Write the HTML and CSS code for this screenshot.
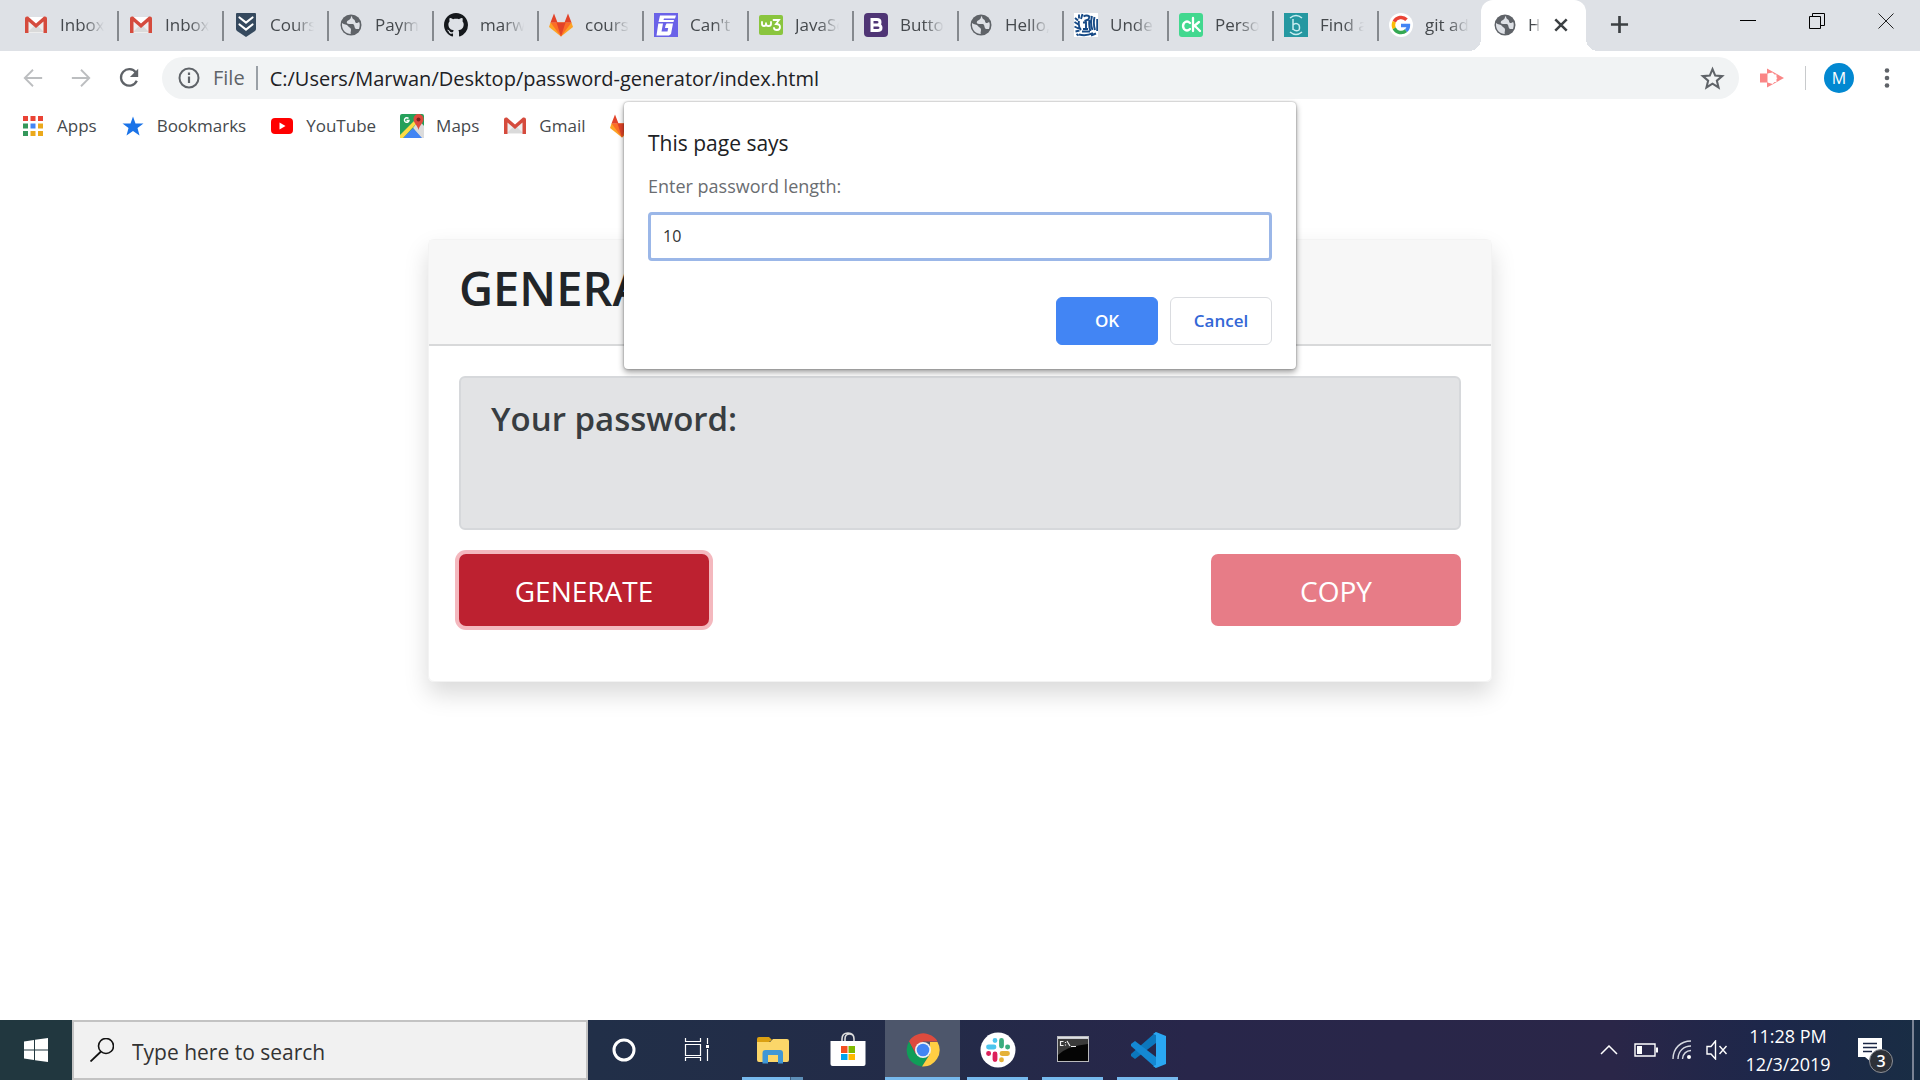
FILE: index.html
```html
<!DOCTYPE html>
<html lang="en">
<head>
<meta charset="utf-8">
<title>Hello, world!</title>
<link rel="stylesheet" href="styles.css">
</head>
<body>
<svg class="sprite" aria-hidden="true">
  <symbol id="gmail" viewBox="0 0 24 24"><path fill="#eee" d="M3 4h18v16H3z"/><path fill="#dadada" d="M4 19l8-8 8 8z"/><path fill="#fff" d="M4 4h16l-8 7z"/><path fill="#d54b3d" d="M1 20V5.500q0-2 2-2h1l8 7 8-7h1q2 0 2 2V20h-3.500V8.500L12 15 4.500 8.500V20z"/></symbol>
  <symbol id="shield" viewBox="0 0 24 24"><path fill="#35495e" d="M2 1q0-1 1-1h18q1 0 1 1v15q0 1-1 2l-9 6-9-6q-1-1-1-2z"/><path fill="none" stroke="#fff" stroke-width="2.200" stroke-linecap="round" d="M5.500 4.500l6.500 5 6.500-5M5.500 11.500l6.500 5 6.500-5"/></symbol>
  <symbol id="globe" viewBox="0 0 24 24"><circle cx="12" cy="12" r="10.500" fill="#5f6368"/><path fill="#dee1e6" d="M3 10c2 2 5 1 6 3 1 2 3 1 3 4 0 2-1 3 0 4-5 0-9-4-9-9zM13 3c-2 1 0 2-3 4-3 1-3 4 0 4h4c2 1 1 4 3 5h3c1-3 1-6 0-7-2 2-4 1-4-1 0-2-3-1-3-5z"/></symbol>
  <symbol id="github" viewBox="0 0 16 16"><path fill="#15181c" d="M8 0C3.580 0 0 3.580 0 8c0 3.540 2.290 6.530 5.470 7.590.4.070.55-.17.55-.38v-1.490c-2.010.37-2.530-.49-2.690-.94-.09-.23-.48-.94-.82-1.130-.28-.15-.68-.52-.01-.53.63-.01 1.080.58 1.230.82.72 1.210 1.870.87 2.330.66.07-.52.28-.87.510-1.070-1.780-.2-3.640-.89-3.640-3.950 0-.87.310-1.590.82-2.150-.08-.2-.36-1.020.08-2.120 0 0 .67-.21 2.200.82.640-.18 1.320-.27 2-.27s1.360.09 2 .27c1.530-1.040 2.200-.82 2.200-.82.440 1.100.16 1.920.08 2.120.510.56.82 1.270.82 2.150 0 3.070-1.870 3.750-3.650 3.950.29.25.540.73.540 1.480v2.200c0 .21.150.46.550.38A8.010 8.010 0 0 0 16 8c0-4.420-3.580-8-8-8z"/></symbol>
  <symbol id="gitlab" viewBox="0 0 24 24"><path fill="#fca326" d="M1.500 9.500L0 14l12 9.500L24 14l-1.500-4.500z"/><path fill="#fc6d26" d="M1.500 9.500L12 23.500 22.500 9.500z"/><path fill="#e24329" d="M5 .5l3.500 9h-7zM19 .5l3.500 9h-7zM7.500 9.500h9L12 23.500z"/></symbol>
  <symbol id="slant-g" viewBox="0 0 24 24"><path fill="#6a62e8" d="M0 0h24v24H0z"/><path fill="#fff" d="M6 2.500h16l-1 3H10L9.500 7H20l-.5 2H4.500zM4.300 10.500H9L7.500 18.500h6l.7-3.500H11l.5-2.500 1-2H19L17 21l-2 1.500H2.500z"/></symbol>
  <symbol id="w3" viewBox="0 0 24 24"><rect y="2" width="24" height="20" rx="2" fill="#8ac53e"/><path fill="none" stroke="#fff" stroke-width="1.800" stroke-linecap="round" d="M3 9v2q0 2 2 2t2-2V9.500 11q0 2 2.500 2T12 11V9M14.500 7H20l-3 4q4 0 4 3t-3 3-3-2"/></symbol>
  <symbol id="boot" viewBox="0 0 24 24"><rect width="24" height="24" rx="4" fill="#4f3575"/><path fill="none" stroke="#fff" stroke-width="3" d="M8 6.500h5q3 0 3 2.700t-3 2.700H8h5.500q3.500 0 3.500 2.800t-3.500 2.800H8z"/></symbol>
  <symbol id="eagle" viewBox="0 0 24 24"><path fill="#fff" d="M0 0h24v24H0z"/><path fill="none" stroke="#174a86" stroke-width="1.900" d="M1 5l3 2.500M.5 9l4 2.500M.5 13.500l4 2M1.500 18.500l4-1M5 1.500v4M8.500 1L7 6M5 8q-1 6 2 9M9.500 3.500q3-2 6 0l-1 3-4 1.500M9 9.500h3V15M9 16h5M8 18.500h8M15.500 7q-1 6 1 11M18 3q-2 8 .5 14M20.500 4q-1.500 7 .5 13M23.200 6v12M5 21.500q7 2 14-1.500M2.500 21l2 1.500M17 22.500l5-2"/></symbol>
  <symbol id="ck" viewBox="0 0 24 24"><rect width="24" height="24" rx="3" fill="#42d88f"/><path fill="none" stroke="#fff" stroke-width="2.300" stroke-linecap="round" d="M11 10q-3-3-6 0-2 3 0 6 3 3 6 0M14 5v13M20 9l-6 5M16 13l5 5"/></symbol>
  <symbol id="bb" viewBox="0 0 24 24"><path fill="#2598a1" d="M0 0h24v24H0z"/><path fill="none" stroke="#c9edf0" stroke-width="1.500" d="M6 5q6-5 12 0M6 19q6 5 12 0M9 6v11M9 12q3-3 6 0 1 3 0 5-3 2-6-1"/></symbol>
  <symbol id="google" viewBox="0 0 24 24"><circle cx="12" cy="12" r="12" fill="#fff"/><g fill="none" stroke-width="3.500"><path stroke="#ea4335" d="M5.200 8.800A7.500 7.500 0 0 1 17.500 6.800"/><path stroke="#fbbc05" d="M5.200 8.800a7.500 7.500 0 0 0 0 6.600"/><path stroke="#34a853" d="M5.200 15.400a7.500 7.500 0 0 0 11.800 2.200"/><path stroke="#4285f4" d="M17 17.600q2.400-2 2.400-5.200H12"/></g></symbol>
</svg>

<header class="browser">
  <nav class="tabs" aria-label="Open tabs">
    <div class="tab"><svg><use href="#gmail"/></svg><span>Inbox</span></div>
    <div class="tab"><svg><use href="#gmail"/></svg><span>Inbox</span></div>
    <div class="tab"><svg><use href="#shield"/></svg><span>Cours</span></div>
    <div class="tab"><svg><use href="#globe"/></svg><span>Payme</span></div>
    <div class="tab"><svg><use href="#github"/></svg><span>marwa</span></div>
    <div class="tab"><svg><use href="#gitlab"/></svg><span>course</span></div>
    <div class="tab"><svg><use href="#slant-g"/></svg><span>Can't</span></div>
    <div class="tab"><svg><use href="#w3"/></svg><span>JavaSc</span></div>
    <div class="tab"><svg><use href="#boot"/></svg><span>Button</span></div>
    <div class="tab"><svg><use href="#globe"/></svg><span>Hello,</span></div>
    <div class="tab"><svg><use href="#eagle"/></svg><span>Under</span></div>
    <div class="tab"><svg><use href="#ck"/></svg><span>Person</span></div>
    <div class="tab"><svg><use href="#bb"/></svg><span>Find a</span></div>
    <div class="tab last"><svg><use href="#google"/></svg><span>git ad</span></div>
    <div class="tab active"><svg><use href="#globe"/></svg><span>He</span><button class="icon-btn close" aria-label="Close tab"><svg viewBox="0 0 14 14"><path d="M2 2l10 10M12 2L2 12" stroke="#3c4043" stroke-width="2.200"/></svg></button></div>
    <button class="icon-btn new-tab" aria-label="New tab"><svg viewBox="0 0 20 20"><path d="M10 1v18M1 10h18" stroke="#3c4043" stroke-width="2.800"/></svg></button>
    <div class="window-controls">
      <button class="icon-btn" aria-label="Minimize"><svg viewBox="0 0 16 16"><path d="M0 7.500h16" stroke="#000"/></svg></button>
      <button class="icon-btn" aria-label="Restore"><svg viewBox="0 0 16 16"><path d="M.5 3.500h11v12H.5zM3.500 3.500v-3h12v12h-4" fill="none" stroke="#000"/></svg></button>
      <button class="icon-btn" aria-label="Close"><svg viewBox="0 0 16 16"><path d="M.5.5l15 15M15.500.5l-15 15" stroke="#222"/></svg></button>
    </div>
  </nav>

  <div class="toolbar">
    <button class="icon-btn nav" aria-label="Back"><svg viewBox="0 0 24 24"><path d="M22 12H3M12 3l-9 9 9 9" fill="none" stroke="#bcbec0" stroke-width="2"/></svg></button>
    <button class="icon-btn nav" aria-label="Forward"><svg viewBox="0 0 24 24"><path d="M2 12h19M12 3l9 9-9 9" fill="none" stroke="#bcbec0" stroke-width="2"/></svg></button>
    <button class="icon-btn nav" aria-label="Reload"><svg viewBox="0 0 24 24"><path d="M19.500 6A9 9 0 1 0 20.500 15" fill="none" stroke="#5f6368" stroke-width="2.500"/><path d="M22 2v9h-9z" fill="#5f6368"/></svg></button>
    <div class="omnibox">
      <svg class="info" viewBox="0 0 22 22"><circle cx="11" cy="11" r="9.500" fill="none" stroke="#5f6368" stroke-width="2"/><path d="M11 9.500V16M11 5.500V8" stroke="#5f6368" stroke-width="2.200"/></svg>
      <span class="scheme">File</span>
      <input class="url" aria-label="Address" value="C:/Users/Marwan/Desktop/password-generator/index.html">
      <button class="icon-btn" aria-label="Bookmark this page"><svg class="star" viewBox="0 0 24 24"><path d="M12 3l2.600 6.200 6.700.5-5.100 4.400 1.600 6.500L12 17l-5.800 3.600 1.600-6.500-5.100-4.400 6.700-.5z" fill="none" stroke="#5f6368" stroke-width="2"/></svg></button>
    </div>
    <button class="icon-btn ext" aria-label="Extension"><svg viewBox="0 0 24 20"><path fill="#fa8686" d="M0 5.500h7v9H0zM7 .5l17 9.500-17 9.500z"/><path fill="#fff" d="M7.500 5.500l5-1 2 2h2v3l1 .5-1 1v3h-2l-2 2-5-1.500z"/></svg></button>
    <button class="avatar" aria-label="Profile">M</button>
    <button class="icon-btn menu" aria-label="Menu"><svg viewBox="0 0 6 22"><g fill="#5f6368"><circle cx="3" cy="3.500" r="2.300"/><circle cx="3" cy="11" r="2.300"/><circle cx="3" cy="18.500" r="2.300"/></g></svg></button>
  </div>

  <nav class="bookmarks" aria-label="Bookmarks">
    <a href="#"><svg viewBox="0 0 24 24"><path fill="#ea4335" d="M2 2h5v5H2zM9.500 2h5v5h-5zM17 2h5v5h-5z"/><path fill="#34985b" d="M2 9.500h5v5H2zM2 17h5v5H2z"/><path fill="#4285f4" d="M9.500 9.500h5v5h-5z"/><path fill="#eba91c" d="M17 9.500h5v5h-5zM9.500 17h5v5h-5zM17 17h5v5h-5z"/></svg>Apps</a>
    <a href="#"><svg viewBox="0 0 24 24"><path fill="#1a73e8" d="M12 2.500l2.500 7h8l-6 4.500 2 7.500-6.500-4.500-6.500 4.500 2-7.500-6-4.500h8z"/></svg>Bookmarks</a>
    <a href="#"><svg viewBox="0 0 24 24"><rect x="1" y="4" width="22" height="16" rx="4" fill="#f00"/><path fill="#fff" d="M9.500 8.500l6 3.500-6 3.500z"/></svg>YouTube</a>
    <a href="#"><svg viewBox="0 0 24 24"><rect width="24" height="24" rx="2" fill="#25a05a"/><path fill="#dcdcdc" d="M24 12v12h-3l-8-10 6-8z"/><path fill="#4285f4" d="M3 24l10-10 9 10z"/><path fill="#fddb46" d="M0 21L16 5l1 4L3 24H0z"/><path fill="#dd4b3e" d="M13.500 5a5 5 0 0 1 10 0c0 4-4 6-5 11-1-5-5-7-5-11z"/><circle cx="18.500" cy="5.500" r="2" fill="#7b231e"/><path d="M8.500 4.500a2.300 2.300 0 1 0 .5 2H6.500" fill="none" stroke="#fff" stroke-width="1.400"/></svg>Maps</a>
    <a href="#"><svg><use href="#gmail"/></svg>Gmail</a>
    <a href="#" aria-label="GitLab"><svg><use href="#gitlab"/></svg></a>
  </nav>
</header>

<main class="page">
  <section class="card">
    <h1>GENERATE PASSWORD</h1>
    <div class="card-body">
      <div class="result"><h2>Your password:</h2></div>
      <div class="actions">
        <button class="btn focus">GENERATE</button>
        <button class="btn disabled" disabled>COPY</button>
      </div>
    </div>
  </section>
</main>

<form class="prompt" role="dialog" aria-labelledby="prompt-title">
  <h2 id="prompt-title">This page says</h2>
  <label for="len">Enter password length:</label>
  <input id="len" type="text" value="10">
  <div class="prompt-actions">
    <button type="button" class="ok">OK</button>
    <button type="button" class="cancel">Cancel</button>
  </div>
</form>

<footer class="taskbar">
  <button class="start" aria-label="Start"><svg viewBox="0 0 24 24"><path fill="#fff" d="M0 3.500l10-1.500v9.500H0zM11 1.800L24 0v11.500H11zM0 12.500h10V22L0 20.500zM11 12.500h13V24l-13-1.800z"/></svg></button>
  <div class="search">
    <svg viewBox="0 0 24 24"><circle cx="16" cy="8" r="7.500" fill="none" stroke="#111" stroke-width="1.600"/><path d="M11 13.500L.5 23.500" stroke="#111" stroke-width="1.800"/></svg>
    <input type="text" aria-label="Search" placeholder="Type here to search">
  </div>
  <div class="apps">
    <button class="app narrow" aria-label="Cortana"><svg viewBox="0 0 40 40"><circle cx="20" cy="20" r="10" fill="none" stroke="#fff" stroke-width="3"/></svg></button>
    <button class="app" aria-label="Task view"><svg viewBox="0 0 40 40"><path fill="none" stroke="#fff" stroke-width="1.200" d="M7.500 8v3.500h15V8M7.500 14.500h15v11h-15zM7.500 31v-3.500h15V31M29.500 8v6M29.500 19v12"/><path fill="#fff" d="M28 15h3v3h-3z"/></svg></button>
    <button class="app running split" aria-label="File Explorer"><svg viewBox="0 0 40 40"><path fill="#dba012" d="M4 9q0-2 2-2h10l3 3-3 2H4z"/><path fill="#fbd669" d="M4 12h13l3-3h14q2 0 2 2v19q0 2-2 2H6q-2 0-2-2z"/><path fill="#3f97d6" d="M9.500 23q0-3 3-3H27q3 0 3 3v10.500h-5V25H15v8.500H9.500z"/></svg></button>
    <button class="app" aria-label="Store"><svg viewBox="0 0 40 40"><path fill="none" stroke="#ddd" stroke-width="1.600" d="M14 12V9q0-6 6-6t6 6v3M17 12V9q0-5 4.500-5T26 9"/><path fill="#fff" d="M2.500 11h35v23q0 2-2 2h-31q-2 0-2-2z"/><path fill="#f25022" d="M13 16h6.500v7H13z"/><path fill="#7fba00" d="M20.500 16H27v7h-6.500z"/><path fill="#00a4ef" d="M13 24h6.500v6H13z"/><path fill="#ffb900" d="M20.500 24H27v6h-6.500z"/></svg></button>
    <button class="app running current" aria-label="Chrome"><svg viewBox="0 0 40 40"><path fill="#dd4b3e" d="M6 11.500a16.500 16.500 0 0 1 28.500 0H20L13 24z"/><path fill="#109d58" d="M6 11.500A16.500 16.500 0 0 0 19 36.500l7.500-12.500-14 0z"/><path fill="#ffce43" d="M34.500 12A16.500 16.500 0 0 1 19 36.500L27 24V12z"/><circle cx="20" cy="20" r="8" fill="#f1f1f1"/><circle cx="20" cy="20" r="6.300" fill="#4285f4"/></svg></button>
    <button class="app running" aria-label="Slack"><svg viewBox="0 0 40 40"><circle cx="20" cy="20" r="17.500" fill="#fff"/><g fill="none" stroke-width="4.800" stroke-linecap="round"><path stroke="#4cc5ee" d="M10.500 17H16M17 10.400v.2"/><path stroke="#39ad7e" d="M23.500 10.500V16M29.500 17h.2"/><path stroke="#e5b137" d="M24 23.500h5.500M23.500 29.700v.2"/><path stroke="#dc2059" d="M17 24v5.500M10.500 23.500h.2"/></g></svg></button>
    <button class="app running" aria-label="Command Prompt"><svg viewBox="0 0 40 40"><path fill="#b9babd" d="M4 6h32v26H4z"/><path fill="#dcdfe4" d="M5 7h30v1.500H5z"/><path fill="#050505" d="M5 9h30v22H5z"/><path fill="#3a3a3a" d="M5 9h30v5Q14 16 5 25z"/><path fill="none" stroke="#eee" stroke-width="1.200" d="M10.500 11.500h-3v4h3M12.500 12v1M12.500 14.500v1M14 11l3 5M18 16.500h5"/></svg></button>
    <button class="app running" aria-label="Visual Studio Code"><svg viewBox="0 0 40 40"><path fill="#0c77bd" d="M28 2v11L7 29l-4-3v-2z"/><path fill="#1488d3" d="M3 14l4-3 21 16v11L3 16z"/><path fill="#2aa7f2" d="M28 2l10 4v28l-10 4-3-2 3-1V5l-3-1z"/></svg></button>
  </div>
  <div class="tray">
    <svg class="chev" viewBox="0 0 18 10"><path d="M1 9l8-8 8 8" fill="none" stroke="#fff" stroke-width="1.500"/></svg>
    <svg class="batt" viewBox="0 0 24 14"><path d="M1 1h20v12H1z" fill="none" stroke="#fff" stroke-width="1.400"/><path fill="#fff" d="M3 3h5v8H3zM22 4.500h2v5h-2z"/></svg>
    <svg class="wifi" viewBox="0 0 20 20"><path d="M1 19C1 8 9 1 19 1M6 19C6 11 12 6 19 6M10.500 19c0-5 4-8.500 8.500-8.500" fill="none" stroke="#d7dae2" stroke-width="1.400"/><circle cx="17" cy="17" r="2" fill="#fff"/></svg>
    <svg class="vol" viewBox="0 0 22 20"><path d="M1 6.500h4L9.500 1v18L5 14H1zM13.500 6l7 8M20.500 6l-7 8" fill="none" stroke="#fff" stroke-width="1.400"/></svg>
    <div class="clock"><span>11:28 PM</span><span>12/3/2019</span></div>
    <button class="notify" aria-label="Notifications"><svg viewBox="0 0 24 24"><path fill="#fff" d="M0 0h24v19H13v5l-6-5H0z"/><path d="M5 5.500h14M5 9.500h14M5 13.500h9" stroke="#1b2745" stroke-width="1.400"/></svg><span class="badge">3</span></button>
    <div class="peek"></div>
  </div>
</footer>
</body>
</html>
```
FILE: styles.css
```css
* { box-sizing: border-box; }

body {
  margin: 0;
  min-height: 100vh;
  display: flex;
  flex-direction: column;
  position: relative;
  background: #fff;
  color: #212529;
  font-family: "Open Sans", "Noto Sans", sans-serif;
  overflow-x: hidden;
}

h1, h2 { margin: 0; }
button, input { font: inherit; }
svg { display: block; flex: none; }
.sprite { display: none; }

.icon-btn {
  display: grid;
  place-items: center;
  padding: 0;
  border: 0;
  background: none;
}

/* Tab strip */
.tabs {
  display: flex;
  height: 51px;
  padding-left: 14px;
  background: #dee1e6;
}

.tab {
  display: flex;
  align-items: center;
  gap: 12px;
  flex: 0 1 105px;
  min-width: 0;
  padding: 0 11px 2px 10px;
  font-size: 17px;
  color: #45494d;
  background: linear-gradient(#85898e, #85898e) right center / 2px 30px no-repeat;
}

.tab svg { width: 24px; height: 24px; }

.tab span {
  flex: 1;
  min-width: 0;
  overflow: hidden;
  white-space: nowrap;
  -webkit-mask-image: linear-gradient(90deg, #000 50%, transparent 92%);
  mask-image: linear-gradient(90deg, #000 50%, transparent 92%);
}

.tab.last { background: none; }

.tab.active {
  position: relative;
  margin-left: -3px;
  padding: 0 16px 2px 12px;
  gap: 11px;
  background: #fff;
  border-radius: 12px 12px 0 0;
}

.tab.active::before,
.tab.active::after {
  content: "";
  position: absolute;
  bottom: 0;
  width: 12px;
  height: 12px;
}

.tab.active::before { right: 100%; background: radial-gradient(circle at 0 0, transparent 12px, #fff 12px); }
.tab.active::after { left: 100%; background: radial-gradient(circle at 100% 0, transparent 12px, #fff 12px); }
.tab.active .close { width: 18px; }
.tab.active .close svg { width: 16px; height: 16px; }

.new-tab { width: 66px; padding-bottom: 2px; }
.new-tab svg { width: 19px; height: 19px; }

.window-controls { display: flex; margin-left: auto; height: 42px; }
.window-controls button { width: 69px; }
.window-controls svg { width: 16px; height: 16px; }

/* Toolbar */
.toolbar {
  display: flex;
  align-items: center;
  height: 54px;
  padding: 0 9px;
}

.nav { width: 48px; height: 42px; }
.nav svg { width: 22px; height: 22px; }

.omnibox {
  display: flex;
  align-items: center;
  flex: 1;
  height: 42px;
  margin-left: 9px;
  padding: 0 14px 0 16px;
  border-radius: 21px;
  background: #f1f3f4;
  font-size: 20px;
}

.info { width: 22px; height: 22px; }

.scheme {
  margin-left: 13px;
  padding-right: 11px;
  border-right: 2px solid #9aa0a6;
  line-height: 24px;
  color: #5f6368;
}

.url {
  flex: 1;
  min-width: 0;
  padding: 0 12px;
  border: 0;
  background: none;
  color: #202124;
}

.star { width: 25px; height: 25px; }
.ext { width: 67px; height: 24px; border-right: 1px solid #c8cacc; }
.ext svg { width: 24px; height: 20px; }

.avatar {
  width: 30px;
  height: 30px;
  margin-left: 18px;
  padding: 0;
  border: 0;
  border-radius: 50%;
  background: #0288d1;
  color: #fff;
  font-size: 16px;
}

.menu { width: 48px; margin-left: 9px; }
.menu svg { width: 6px; height: 22px; }

/* Bookmarks bar */
.bookmarks {
  display: flex;
  gap: 24px;
  height: 41px;
  padding: 0 21px;
}

.bookmarks a {
  display: flex;
  align-items: center;
  gap: 12px;
  font-size: 17px;
  color: #45494d;
  text-decoration: none;
}

.bookmarks svg { width: 24px; height: 24px; }

/* Page */
.page {
  flex: 1;
  padding: 93px 24px 48px;
}

.card {
  width: 100%;
  max-width: 1064px;
  margin: 0 auto;
  border: 1px solid #f3f3f3;
  border-radius: 6px;
  box-shadow: 0 12px 24px rgba(0, 0, 0, .15);
}

.card h1 {
  padding: 20px 30px 27px;
  border-bottom: 2px solid #d8d9da;
  background: #f7f7f7;
  font-size: 47px;
  line-height: 57px;
  font-weight: 600;
  white-space: nowrap;
}

.card-body { padding: 30px 30px 55px; }

.result {
  height: 154px;
  padding: 16px 30px;
  border: 2px solid #d6d8db;
  border-radius: 6px;
  background: #e2e3e5;
  color: #383d41;
}

.result h2 { font-size: 33px; line-height: 50px; font-weight: 600; }

.actions {
  display: flex;
  justify-content: space-between;
  margin-top: 24px;
}

.btn {
  width: 250px;
  height: 72px;
  padding: 2px 0 0;
  border: 0;
  border-radius: 7px;
  background: #e77c87;
  color: #fff;
  font-size: 28px;
}

.btn.focus { background: #bd2130; box-shadow: 0 0 0 4px #f4b8be; }

/* Prompt dialog */
.prompt {
  position: absolute;
  top: 102px;
  left: 50%;
  width: 672px;
  margin-left: -336px;
  padding: 23px 24px 24px;
  border-radius: 4px;
  background: #fff;
  box-shadow: 0 0 2px rgba(0, 0, 0, .4), 0 3px 6px rgba(0, 0, 0, .4);
  color: #202124;
}

.prompt h2 { font-size: 21px; line-height: 36px; font-weight: 400; }

.prompt label {
  display: block;
  margin-top: 11px;
  font-size: 18px;
  line-height: 28px;
  color: #6a6d71;
}

.prompt input {
  display: block;
  width: 100%;
  height: 49px;
  margin-top: 12px;
  padding: 0 12px 2px;
  border: 3px solid #9bb7e8;
  border-radius: 4px;
  color: #333;
  font-size: 16px;
}

.prompt-actions {
  display: flex;
  justify-content: flex-end;
  gap: 12px;
  margin-top: 36px;
}

.prompt-actions button {
  width: 102px;
  height: 48px;
  padding: 0 0 2px;
  border: 1px solid #dadce0;
  border-radius: 6px;
  background: #fff;
  color: #3367d6;
  font-size: 17px;
  font-weight: 600;
}

.prompt-actions .ok { border-color: #4285f4; background: #4285f4; color: #fff; }

/* Taskbar */
.taskbar {
  display: flex;
  height: 60px;
  background: linear-gradient(90deg, #21373f 0, #21373f 4%, #212f48 31%, #232b48 48%, #28264a 62%, #2a2648 84%, #1d274a 92%, #192d44 100%);
  color: #fff;
}

.start, .app {
  display: grid;
  place-items: center;
  padding: 0;
  border: 0;
  background: none;
}

.start { width: 72px; }
.start svg { width: 24px; height: 24px; }

.search {
  display: flex;
  align-items: center;
  gap: 18px;
  flex: 0 1 516px;
  min-width: 0;
  padding: 0 16px;
  border: 2px solid #c3c3c3;
  background: #f1f1f1;
}

.search svg { width: 24px; height: 24px; }

.search input {
  flex: 1;
  min-width: 0;
  padding: 3px 0 0;
  border: 0;
  background: none;
  font-size: 21px;
}

.search input::placeholder { color: #333; opacity: 1; }

.apps { display: flex; }
.app { width: 75px; }
.app.narrow { width: 72px; }
.app svg { width: 40px; height: 40px; }

.running { background: linear-gradient(#76b9ed, #76b9ed) center bottom / 61px 3px no-repeat; }

.running.split {
  background: linear-gradient(90deg, #76b9ed 48px, #3f5f80 48px, #3f5f80 49px, #5d8fb8 49px) center bottom / 61px 3px no-repeat;
}

.running.current {
  background: linear-gradient(#76b9ed, #76b9ed) center bottom / 100% 3px no-repeat, #4d566b;
}

.tray {
  display: flex;
  align-items: center;
  margin-left: auto;
}

.chev { width: 18px; height: 10px; }
.batt { width: 24px; height: 14px; margin-left: 16px; }
.wifi { width: 20px; height: 20px; margin-left: 14px; }
.vol { width: 22px; height: 20px; margin-left: 14px; }

.clock {
  display: flex;
  flex-direction: column;
  width: 104px;
  margin-left: 8px;
  font-size: 18px;
  line-height: 28px;
  text-align: center;
}

.notify {
  position: relative;
  width: 24px;
  height: 24px;
  margin-left: 18px;
  padding: 0;
  border: 0;
  background: none;
}

.notify svg { width: 24px; height: 24px; }

.badge {
  position: absolute;
  left: 11px;
  top: 11px;
  width: 24px;
  height: 24px;
  border: 1px solid #8d9097;
  border-radius: 50%;
  background: #2d3138;
  color: #fff;
  font-size: 16px;
  font-weight: 600;
  line-height: 22px;
}

.peek {
  align-self: stretch;
  width: 8px;
  margin-left: 30px;
  border-left: 2px solid #7b8394;
}
```
